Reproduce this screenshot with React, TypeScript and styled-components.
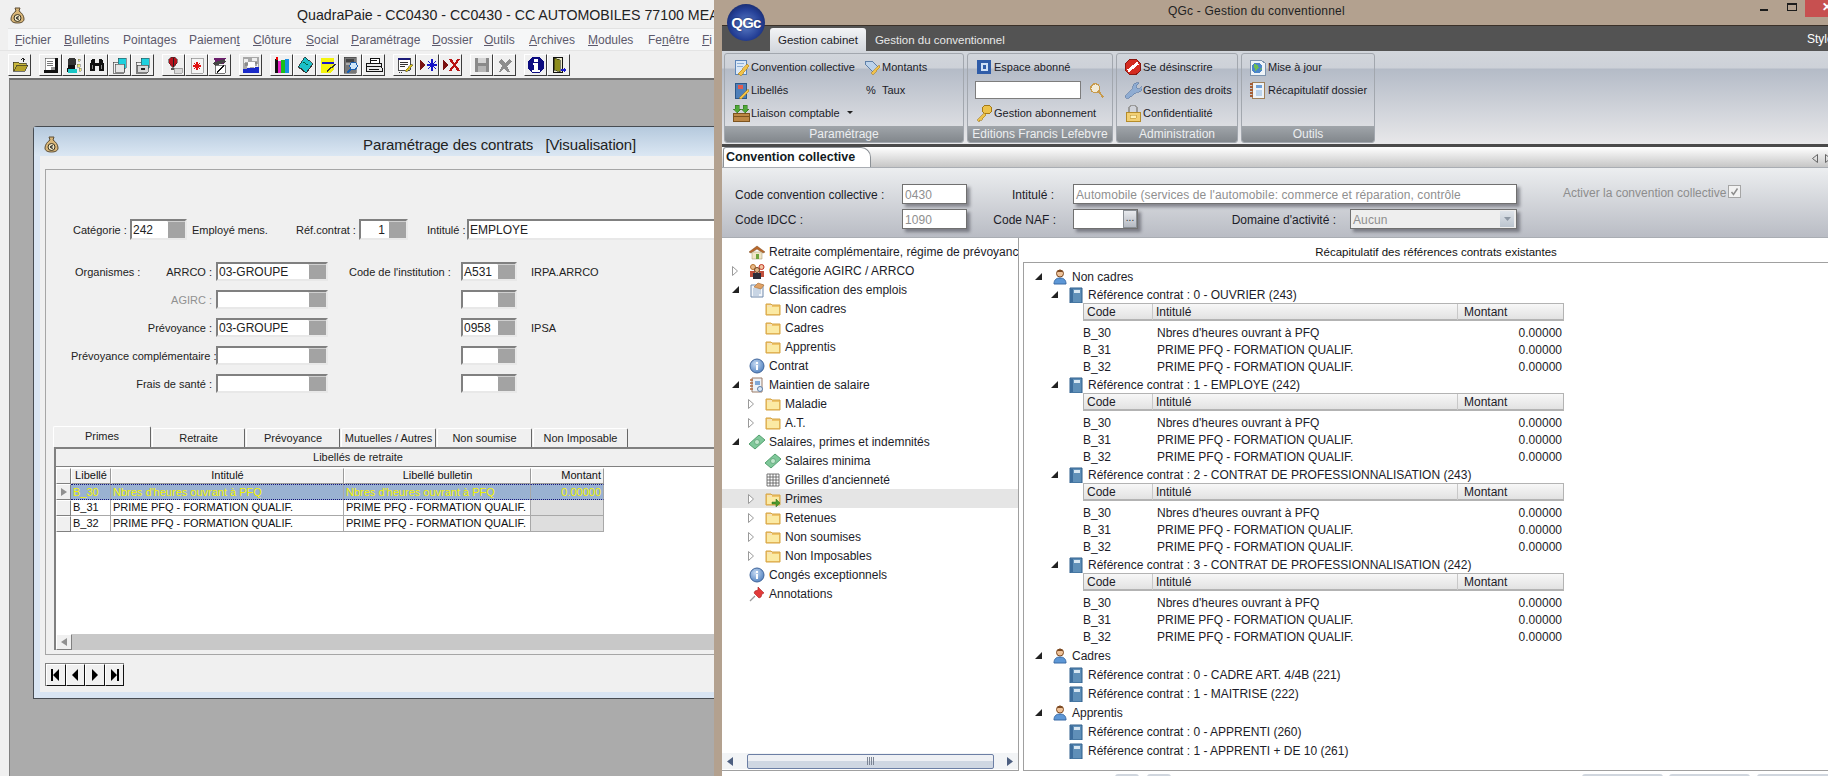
import React from "react";
import styled, { createGlobalStyle } from "styled-components";

const Global = createGlobalStyle`
  html, body { margin: 0; padding: 0; width: 1828px; height: 776px; overflow: hidden; background: #fff; }
  * { box-sizing: border-box; }
  body { font-family: "Liberation Sans", Arial, sans-serif; }
`;

const Page = styled.div`
  display: flex;
  width: 1828px;
  height: 776px;
  overflow: hidden;
`;

/* ---------- left application (QuadraPaie) ---------- */
const PaieWindow = styled.div`
  width: 714px;
  height: 776px;
  flex: none;
  display: flex;
  flex-direction: column;
  overflow: hidden;
  background: #f0f0f0;
`;
const PaieTitle = styled.div`
  height: 28px;
  flex: none;
  display: flex;
  align-items: center;
  padding: 2px 0 0 10px;
  color: #222;
  font-size: 14.200px;
  white-space: nowrap;
`;
const PaieTitleText = styled.span`
  margin-left: 272px;
`;
const MenuBar = styled.div`
  height: 22px;
  flex: none;
  margin-left: 8px;
  padding-left: 7px;
  display: flex;
  align-items: center;
  background: #f6f7f8;
  border-top: 1px solid #e2e2e2;
  white-space: nowrap;
`;
const MenuItem = styled.span<{ $w: number }>`
  width: ${(p) => p.$w}px;
  flex: none;
  font-size: 12px;
  color: #5c596b;
  u { text-underline-offset: 1px; }
`;
const ToolBar = styled.div`
  height: 28px;
  flex: none;
  display: flex;
  align-items: flex-start;
  padding: 3px 0 0 8px;
  border-top: 1px solid #e4e4e4;
`;
const ToolBtn = styled.div<{ $gap: number }>`
  width: 23px;
  height: 22px;
  flex: none;
  margin-left: ${(p) => p.$gap}px;
  display: flex;
  align-items: center;
  justify-content: center;
  background: #f0f0f0;
  border: 1px solid;
  border-color: #fff #3c3c3c #3c3c3c #fff;
`;
const MdiArea = styled.div`
  flex: 1;
  margin-left: 9px;
  background: #ababab;
  border-top: 2px solid #6e6e6e;
  border-left: 1px solid #808080;
  padding: 46px 0 0 23px;
  overflow: hidden;
`;
const ChildWindow = styled.div`
  width: 800px;
  height: 573px;
  display: flex;
  flex-direction: column;
  background: #d9e5f3;
  border: 1px solid #474c52;
  border-right: none;
  border-radius: 4px 0 0 0;
  padding: 0 0 6px 6px;
`;
const ChildTitle = styled.div`
  height: 29px;
  flex: none;
  margin-left: -6px;
  padding: 5px 0 0 10px;
  display: flex;
  align-items: center;
  background: linear-gradient(#b5c9dd, #dbe7f3);
  color: #222;
  font-size: 15px;
  white-space: nowrap;
`;
const ChildTitleText = styled.span`
  margin-left: 304px;
  white-space: pre;
  letter-spacing: -0.1px;
`;
const ChildBody = styled.div`
  flex: 1;
  display: flex;
  flex-direction: column;
  background: #f0f0f0;
  padding: 13px 0 0 5px;
`;
const Frame = styled.div`
  height: 486px;
  flex: none;
  border: 1px solid #a6a6a6;
  border-right: none;
  font-size: 11px;
  color: #222;
  white-space: nowrap;
`;
const TopRow = styled.div`
  margin-top: 49px;
  height: 21px;
  padding-left: 27px;
  display: flex;
  align-items: center;
`;
const FormLabel = styled.span<{ $w: number; $pad?: number }>`
  width: ${(p) => p.$w}px;
  padding-left: ${(p) => p.$pad ?? 0}px;
  flex: none;
`;
const OrgRows = styled.div`
  margin-top: 22px;
  display: flex;
  flex-direction: column;
  gap: 9px;
`;
const OrgRow = styled.div`
  height: 19px;
  padding-left: 25px;
  display: flex;
  align-items: center;
`;
const OrgCell = styled.span<{ $muted?: boolean }>`
  width: 141px;
  flex: none;
  display: flex;
  margin-right: 4px;
  color: ${(p) => (p.$muted ? "#909090" : "inherit")};
`;
const OrgCaption = styled.span`
  padding-left: 4px;
`;
const OrgName = styled.span`
  margin-left: auto;
`;
const InstLabel = styled.span`
  width: 133px;
  padding-left: 21px;
  flex: none;
`;
const InstNote = styled.span`
  margin-left: 14px;
`;
const SunkenField = styled.div<{ $w: number }>`
  width: ${(p) => p.$w}px;
  height: 100%;
  flex: none;
  display: flex;
  align-items: center;
  background: #fff;
  border: 2px solid;
  border-color: #808080 #e8e8e8 #e8e8e8 #808080;
  padding-left: 1px;
  font-size: 12px;
  overflow: hidden;
`;
const SunkenRight = styled.span`
  flex: 1;
  text-align: right;
  padding-right: 3px;
`;
const SpinBtn = styled.span`
  width: 18px;
  height: 100%;
  flex: none;
  margin-left: auto;
  background: #a3a3a3;
  border-left: 1px solid #fff;
  border-top: 1px solid #d0d0d0;
`;
const TabStrip = styled.div`
  margin: 33px 0 0 7px;
  height: 21px;
  display: flex;
  align-items: flex-end;
`;
const OldTab = styled.div<{ $active?: boolean; $w: number }>`
  width: ${(p) => p.$w}px;
  height: ${(p) => (p.$active ? 21 : 19)}px;
  flex: none;
  display: flex;
  align-items: center;
  justify-content: center;
  padding-bottom: ${(p) => (p.$active ? 3 : 0)}px;
  margin-right: 1px;
  border: 1px solid;
  border-bottom: none;
  border-color: #fff #666 #666 #fff;
  border-radius: 2px 2px 0 0;
`;
const TabPanel = styled.div`
  margin-left: 8px;
  height: 203px;
  display: flex;
  flex-direction: column;
  border-top: 2px solid #808080;
  border-left: 2px solid #808080;
`;
const TabPanelHead = styled.div`
  height: 17px;
  flex: none;
  width: 604px;
  text-align: center;
  line-height: 16px;
  background: #f0f0f0;
`;
const GridArea = styled.div`
  flex: 1;
  background: #fff;
  border-top: 1px solid #808080;
  padding-top: 1px;
`;
const GridRow = styled.div<{ $selected?: boolean }>`
  display: grid;
  grid-template-columns: 15px 40px 233px 187px 73px;
  width: 548px;
  height: 16px;
  align-items: stretch;
  color: ${(p) => (p.$selected ? "#f4f400" : "#111")};
`;
const GridHeadCell = styled.div<{ $right?: boolean }>`
  background: #f0f0f0;
  border: 1px solid;
  border-color: #fff #9a9a9a #9a9a9a #fff;
  text-align: ${(p) => (p.$right ? "right" : "center")};
  padding: 0 2px;
  line-height: 13px;
`;
const GridIndicator = styled.div`
  background: #f0f0f0;
  border: 1px solid;
  border-color: #fff #808080 #808080 #fff;
  display: flex;
  align-items: center;
  justify-content: center;
`;
const GridCell = styled.div<{ $selected?: boolean; $blank?: boolean; $right?: boolean }>`
  background: ${(p) => (p.$selected ? "#9ab2d2" : p.$blank ? "#dedede" : "#fff")};
  border-right: 1px solid #a8a8a8;
  border-bottom: ${(p) => (p.$selected ? "1px dotted #14147a" : "1px solid #a8a8a8")};
  border-top: ${(p) => (p.$selected ? "1px dotted #14147a" : "none")};
  padding: 0 2px;
  line-height: 14px;
  font-size: 11px;
  text-align: ${(p) => (p.$right ? "right" : "left")};
  overflow: hidden;
`;
const OldScroll = styled.div`
  height: 16px;
  flex: none;
  background: #c8c8c8;
  display: flex;
`;
const OldScrollBtn = styled.div`
  width: 16px;
  height: 16px;
  background: #f0f0f0;
  border: 1px solid;
  border-color: #fff #808080 #808080 #fff;
  display: flex;
  align-items: center;
  justify-content: center;
`;
const NavGroup = styled.div`
  margin-top: 8px;
  width: 79px;
  height: 23px;
  display: flex;
  border-top: 1px solid #808080;
  border-left: 1px solid #808080;
`;
const NavBtn = styled.div`
  flex: 1;
  display: flex;
  align-items: center;
  justify-content: center;
  background: #f0f0f0;
  border: 1px solid;
  border-color: #fff #111 #111 #fff;
`;

/* ---------- right application (QGc) ---------- */
const QgcWindow = styled.div`
  flex: 1;
  position: relative;
  height: 776px;
  display: flex;
  flex-direction: column;
  background: #fff;
  border-left: 8px solid #b3a18f;
  overflow: hidden;
  color: #1c1c28;
`;
const QgcTitle = styled.div`
  height: 26px;
  flex: none;
  margin-left: -8px;
  background: #b3a18f;
  border-bottom: 1px solid #3a3028;
  display: flex;
  align-items: flex-start;
  font-size: 12px;
  color: #222;
`;
const QgcTitleText = styled.span`
  margin: 4px 0 0 454px;
  letter-spacing: 0.2px;
`;
const WinControls = styled.div`
  margin-left: auto;
  display: flex;
  align-items: flex-start;
`;
const MinGlyph = styled.span`
  width: 8px;
  height: 2px;
  margin: 9px 19px 0 0;
  background: #1c1c1c;
`;
const MaxGlyph = styled.span`
  width: 10px;
  height: 8px;
  margin: 3px 8px 0 0;
  border: 1px solid #1c1c1c;
  border-top-width: 2px;
`;
const CloseBtn = styled.span`
  width: 23px;
  height: 17px;
  padding-left: 17px;
  overflow: hidden;
  background: #c75050;
  color: #fff;
  font-size: 12px;
  font-weight: bold;
  line-height: 15px;
`;
const Logo = styled.div`
  position: absolute;
  left: 5px;
  top: 4px;
  width: 38px;
  height: 37px;
  border-radius: 50%;
  display: flex;
  align-items: center;
  justify-content: center;
  background: radial-gradient(circle at 50% 55%, #5d7fc8 0%, #243f96 55%, #1a2d70 75%, #d9dde6 88%, #f1f2f4 100%);
  color: #fff;
  font-size: 15px;
  font-weight: bold;
  letter-spacing: -0.8px;
  text-shadow: 0 0 2px #10204f;
`;
const DarkBand = styled.div`
  height: 25px;
  flex: none;
  background: #535353;
  display: flex;
  align-items: flex-end;
  padding-left: 48px;
  font-size: 11.500px;
  white-space: nowrap;
  color: #e8e8e8;
`;
const RibbonTab = styled.div<{ $active?: boolean }>`
  height: 23px;
  display: flex;
  align-items: center;
  padding: 0 8px;
  margin-right: 1px;
  border-radius: 3px 3px 0 0;
  background: ${(p) => (p.$active ? "linear-gradient(#f3f4f6, #d3d7dd)" : "transparent")};
  color: ${(p) => (p.$active ? "#1c1c28" : "#e8e8e8")};
`;
const StyleLabel = styled.span`
  margin: 0 -8px 5px auto;
  width: 29px;
  overflow: hidden;
  color: #fff;
  font-size: 12px;
`;
const Ribbon = styled.div`
  height: 93px;
  flex: none;
  display: flex;
  gap: 3px;
  padding: 2px 0 0 2px;
  background: linear-gradient(#d2d6dc 0, #cdd1d8 17px, #b4bbc7 18px, #e8e8ea 93px);
  font-size: 11px;
  white-space: nowrap;
`;
const RibbonGroup = styled.div<{ $w: number }>`
  width: ${(p) => p.$w}px;
  height: 90px;
  flex: none;
  display: flex;
  flex-direction: column;
  border: 1px solid #a2a7ae;
  border-radius: 3px;
  overflow: hidden;
`;
const GroupBody = styled.div`
  flex: 1;
  display: flex;
  padding: 1px 0 0 7px;
`;
const GroupCol = styled.div<{ $w?: number }>`
  width: ${(p) => (p.$w ? `${p.$w}px` : "auto")};
  flex: none;
  display: flex;
  flex-direction: column;
`;
const RibbonItem = styled.div`
  height: 23px;
  display: flex;
  align-items: center;
  gap: 1px;
`;
const RibbonSearch = styled.div`
  height: 23px;
  display: flex;
  align-items: center;
  gap: 8px;
`;
const SearchBox = styled.span`
  width: 106px;
  height: 18px;
  background: #fff;
  border: 1px solid #7d7d7d;
`;
const PercentGlyph = styled.span`
  width: 18px;
  flex: none;
  padding-left: 3px;
`;
const DropCaret = styled.span`
  width: 0;
  height: 0;
  margin-left: 6px;
  border-left: 3px solid transparent;
  border-right: 3px solid transparent;
  border-top: 3px solid #222;
`;
const GroupCaption = styled.div`
  height: 16px;
  flex: none;
  text-align: center;
  line-height: 16px;
  font-size: 12px;
  color: #eceef0;
  background: linear-gradient(#a0a5aa, #82878c);
`;
const RibbonEdge = styled.div`
  height: 3px;
  flex: none;
  background: #4a4a4a;
`;
const DocTabStrip = styled.div`
  height: 21px;
  flex: none;
  display: flex;
  align-items: flex-end;
  background: linear-gradient(#ffffff, #c6c6c6);
  border-bottom: 1px solid #a9adb3;
`;
const DocTab = styled.div`
  width: 148px;
  height: 20px;
  margin-left: 1px;
  padding-left: 2px;
  font-size: 12.500px;
  font-weight: bold;
  line-height: 18px;
  color: #111a22;
  background: #fff;
  border: 1px solid #8c9196;
  border-bottom: none;
  border-radius: 3px 10px 0 0;
`;
const DocArrows = styled.div`
  margin: 0 -3px 4px auto;
  display: flex;
  gap: 7px;
`;
const FormPanel = styled.div`
  height: 70px;
  flex: none;
  padding: 16px 0 0 13px;
  display: flex;
  flex-direction: column;
  gap: 5px;
  background: linear-gradient(#eceef0, #b9bcc4);
  border-bottom: 1px solid #a9adb3;
  font-size: 12px;
  white-space: nowrap;
`;
const FormRow = styled.div`
  height: 20px;
  display: flex;
  align-items: center;
`;
const QLabel = styled.span<{ $w: number; $endPad?: number }>`
  width: ${(p) => p.$w}px;
  flex: none;
  padding-top: 2px;
  text-align: ${(p) => (p.$endPad ? "right" : "left")};
  padding-right: ${(p) => p.$endPad ?? 0}px;
`;
const QField = styled.div<{ $w: number; $plain?: boolean }>`
  width: ${(p) => p.$w}px;
  height: 20px;
  flex: none;
  display: flex;
  align-items: center;
  padding: 2px 0 0 2px;
  background: ${(p) => (p.$plain ? "#eeeeee" : "#fff")};
  border: 1px solid #707070;
  box-shadow: 3px 3px 3px rgba(40, 40, 50, 0.45);
  color: #8f8f8f;
  font-size: 12px;
  letter-spacing: 0.1px;
  overflow: hidden;
`;
const EllipsisBtn = styled.span`
  width: 14px;
  height: 18px;
  margin: -2px 0 0 auto;
  background: linear-gradient(#e8eaee, #b5bac2);
  border: 1px solid #8a8f95;
  color: #333;
  font-size: 10px;
  line-height: 14px;
  text-align: center;
`;
const SelectArrow = styled.span`
  width: 14px;
  height: 16px;
  margin: -2px 2px 0 auto;
  display: flex;
  align-items: center;
  justify-content: center;
  background: linear-gradient(#dfe4ea, #bcc5cf);
`;
const ActivateLabel = styled.span`
  margin: 0 0 3px 46px;
  color: #8d8d8d;
`;
const CheckBox = styled.span`
  width: 13px;
  height: 13px;
  margin: 0 0 5px 2px;
  background: #f2f2f2;
  border: 1px solid #a5a5a5;
  display: flex;
  align-items: center;
  justify-content: center;
`;
const Split = styled.div`
  flex: 1;
  min-height: 0;
  display: flex;
  font-size: 12px;
  white-space: nowrap;
`;
const NavPane = styled.div`
  width: 297px;
  flex: none;
  display: flex;
  flex-direction: column;
  border-right: 1px solid #a0a0a0;
  border-bottom: 1px solid #a0a0a0;
`;
const NavRows = styled.div`
  flex: 1;
  padding-top: 4px;
  overflow: hidden;
`;
const TreeRow = styled.div<{ $level: number; $h: number; $selected?: boolean; $base: number }>`
  height: ${(p) => p.$h}px;
  display: flex;
  align-items: center;
  padding-left: ${(p) => p.$base + p.$level * 16}px;
  background: ${(p) => (p.$selected ? "#e5e5e5" : "transparent")};
`;
const ArrowSlot = styled.span`
  width: 22px;
  flex: none;
  padding-left: 5px;
  display: flex;
  align-items: center;
`;
const TreeIcon = styled.span`
  width: 16px;
  height: 16px;
  flex: none;
  margin-right: 4px;
  display: flex;
`;
const HScroll = styled.div`
  height: 16px;
  flex: none;
  margin-bottom: 1px;
  display: flex;
  align-items: center;
  padding: 0 5px;
  background: #f2f4f6;
`;
const HThumb = styled.div`
  width: 247px;
  height: 15px;
  margin: 0 auto;
  display: flex;
  align-items: center;
  justify-content: center;
  gap: 1px;
  border: 1px solid #6c7fa5;
  border-radius: 2px;
  background: linear-gradient(#eef0f4 50%, #cfd7e2 50%);
`;
const GripLine = styled.i`
  width: 1px;
  height: 8px;
  background: #7c8594;
`;
const RecapPane = styled.div`
  width: 826px;
  flex: none;
  margin-left: 4px;
  display: flex;
  flex-direction: column;
`;
const RecapHead = styled.div`
  height: 24px;
  flex: none;
  text-align: center;
  line-height: 28px;
  color: #111;
  font-size: 11.500px;
`;
const RecapBox = styled.div`
  flex: 1;
  padding-top: 4px;
  border: 1px solid #a0a0a0;
  overflow: hidden;
`;
const RecapTable = styled.div`
  margin-left: 59px;
  width: 481px;
`;
const RecapHeader = styled.div`
  height: 18px;
  display: grid;
  grid-template-columns: 69px 305px 107px;
  background: linear-gradient(#f7f7f7, #e2e2e2);
  border: 1px solid #b3b3b3;
  border-bottom-width: 2px;
  margin-bottom: 4px;
`;
const RecapHeadCell = styled.span<{ $last?: boolean }>`
  padding-left: ${(p) => (p.$last ? 6 : 3)}px;
  line-height: 16px;
  border-right: ${(p) => (p.$last ? "none" : "1px solid #c8c8c8")};
`;
const RecapLine = styled.div`
  height: 17px;
  display: grid;
  grid-template-columns: 74px 300px 107px;
  line-height: 17px;
`;
const RecapAmount = styled.span`
  text-align: right;
  padding-right: 2px;
`;
const FootBar = styled.div`
  height: 5px;
  flex: none;
  padding: 3px 0 0 393px;
  display: flex;
  overflow: hidden;
`;
const FootBtn = styled.span<{ $w: number; $gap: number }>`
  width: ${(p) => p.$w}px;
  height: 10px;
  flex: none;
  margin-right: ${(p) => p.$gap}px;
  border-radius: 3px;
  background: #d0d6de;
`;
const BagSvg = styled.svg`
  flex: none;
`;

/* ---------- icons ---------- */
const S = (props: React.SVGProps<SVGSVGElement>) => (
  <svg width="18" height="18" viewBox="0 0 18 18" shapeRendering="crispEdges" {...props} />
);
const Sm = (props: React.SVGProps<SVGSVGElement>) => <svg width="16" height="16" viewBox="0 0 16 16" {...props} />;

const toolIcons: React.ReactNode[] = [
  <S key="a"><path d="M2 6h5l1 1h7v2H7l-4 6H2z" fill="#c9b83c" stroke="#222" strokeWidth=".6" /><path d="M3 15l3-6h11l-3 6z" fill="#b5a22a" stroke="#222" strokeWidth=".6" /><path d="M10 4l2-2 2 2m-2-2v4" stroke="#222" fill="none" /></S>,
  <S key="b"><path d="M3 2h10v12H3z" fill="#fff" stroke="#333" strokeWidth=".5" /><path d="M5 5h6M5 7h6M5 9h6" stroke="#777" /><path d="M13 2h3v15H2v-3h11z" fill="#111" /><path d="M9 11h4v3H9z" fill="#999" /></S>,
  <S key="c"><circle cx="7" cy="6" r="4.500" fill="#333" /><path d="M3 9h7l1 7H2z" fill="#111" /><path d="M3 13h9v4H3z" fill="#18c6c6" /><path d="M13 3h2v2h-2zM12 8h3v3h-3zM14 12h2v3h-2z" fill="#efe97a" stroke="#555" strokeWidth=".4" /></S>,
  <S key="d"><path d="M2 8l2-5h3v4h4V3h3l2 5v7h-5v-5H7v5H2z" fill="#111" /><path d="M4 9h1v4H4zM13 9h1v4h-1z" fill="#888" /></S>,
  <S key="e"><path d="M2 6h11v11H2z" fill="#f1f1f1" stroke="#333" strokeWidth=".6" /><path d="M7 2h8v10H7z" fill="#1fd0de" stroke="#333" strokeWidth=".5" /><path d="M4 8h9v8H4z" fill="#e6e6e6" stroke="#444" strokeWidth=".6" /></S>,
  <S key="f"><path d="M2 6h11v11H2z" fill="#f1f1f1" stroke="#333" strokeWidth=".6" /><path d="M7 2h8v10H7z" fill="#1fd0de" stroke="#333" strokeWidth=".5" /><path d="M3 9h11v7H3z" fill="#d8d8d8" stroke="#333" strokeWidth=".6" /><path d="M7 12h4v2H7z" fill="#222" /></S>,
  <S key="g"><path d="M8 1c4 0 5 3 4 6l-3 4H7L4 7C3 4 4 1 8 1z" fill="#b4141e" stroke="#222" strokeWidth=".5" /><path d="M8 2v9" stroke="#222" /><path d="M6 12h3v2H6z" fill="#555" /><path d="M9 12h8v5H9z" fill="#d9d9d9" stroke="#666" strokeWidth=".5" /></S>,
  <S key="h"><path d="M3 2h12v15H3z" fill="#f5f5f5" stroke="#777" strokeWidth=".6" /><path d="M9 6v8M5 10h8M6 7l6 6M12 7l-6 6" stroke="#e01010" strokeWidth="1.200" /></S>,
  <S key="i"><path d="M3 2h12l-2 6H5z" fill="#6b1e6b" /><path d="M2 7l11-4 2 3-11 4z" fill="#444" /><path d="M4 9h10v8H4z" fill="#fff" stroke="#222" strokeWidth=".6" /><path d="M6 16l7-6" stroke="#111" strokeWidth="1.500" /></S>,
  <S key="j"><path d="M1 1h16v16H1z" fill="#a8a8a8" /><path d="M2 3h4v4H2zM10 2h5v3h-5zM5 9h3v3H5zM12 8h4v4h-4z" fill="#eee" /><path d="M3 6h12v4H3z" fill="#777" opacity=".6" /><path d="M6 6h7v5H6z" fill="#fff" /><path d="M1 13l16-2v6H1z" fill="#1a2ac8" /></S>,
  <S key="k"><path d="M2 3h3v14H2z" fill="#111" /><path d="M3 1h2v3H3z" fill="#e00" /><path d="M5 5h3v12H5z" fill="#e81fc8" /><path d="M8 4h4v13H8z" fill="#18c01a" /><path d="M12 3h4v14h-4z" fill="#1a8fe0" /></S>,
  <S key="l"><path d="M9 1l8 7-7 9-8-6z" fill="#1cc0c8" stroke="#111" strokeWidth=".7" /><path d="M3 11l7 6 7-9" stroke="#333" fill="none" /><path d="M7 6l5 3" stroke="#064" /></S>,
  <S key="m"><path d="M2 2h13v11l-4 4H2z" fill="#f4f40c" /><path d="M3 7h12" stroke="#1a1acc" strokeWidth="1.400" /><path d="M8 16l9-7-1-1-9 7z" fill="#333" /></S>,
  <S key="n"><path d="M2 1h12v16H2z" fill="#777" stroke="#333" strokeWidth=".5" /><path d="M4 3h8v3H4z" fill="#444" /><path d="M4 7h6v2H4z" fill="#aaa" /><circle cx="11.500" cy="10" r="3.600" fill="#cfe6f8" stroke="#1a5fb0" /><path d="M9 13l-4 4" stroke="#1a5fb0" strokeWidth="1.600" /></S>,
  <S key="o"><path d="M5 2h9v5H5z" fill="#fff" stroke="#111" /><path d="M2 7h14l1 5v3H1v-3z" fill="#e8e8e8" stroke="#111" /><path d="M2 10h14M4 13h10" stroke="#111" /><path d="M6 4h6" stroke="#111" /></S>,
  <S key="p"><path d="M2 2h12v12H2z" fill="#fff" stroke="#222" strokeWidth=".8" /><path d="M2 2h12v2H2z" fill="#1a1a78" /><path d="M4 6h8M4 8h8M4 10h5" stroke="#333" /><path d="M9 15l6-7 2 1-6 7z" fill="#d9c21e" stroke="#333" strokeWidth=".4" /><path d="M3 16h4" stroke="#333" strokeDasharray="1 1" /></S>,
  <S key="q"><path d="M1 4l6 5-6 5z" fill="#7a1212" /><path d="M13 3v12M8 9h10M9 5l8 8M17 5l-8 8" stroke="#1515c8" strokeWidth="1.200" /></S>,
  <S key="r"><path d="M1 4l6 5-6 5z" fill="#7a1212" /><path d="M8 3l9 12M17 3l-9 12" stroke="#b81414" strokeWidth="2.200" /></S>,
  <S key="s"><path d="M2 2h14v14H2z" fill="#8a8a8a" /><path d="M5 2h8v5H5z" fill="#d5d5d5" /><path d="M5 10h8v6H5z" fill="#b5b5b5" /></S>,
  <S key="t"><path d="M5 3l4 4 4-4 3 2-5 5 3 6h-3l-3-4-3 4H3l3-6-3-4z" fill="#8d8d8d" /></S>,
  <S key="u"><circle cx="9" cy="9" r="8.500" fill="#0c0c80" /><path d="M7 3h4v3H7zM6 7h5v7h2v2H5v-2h2V9H6z" fill="#fff" /></S>,
  <S key="v"><path d="M3 1h9v15H3z" fill="#e8e8c8" stroke="#111" /><path d="M4 2l6 2v12l-6-2z" fill="#8c8c1c" stroke="#111" strokeWidth=".5" /><path d="M11 14h5m0 0l-2-2m2 2l-2 2" stroke="#1a1acc" strokeWidth="1.400" /></S>,
];
const toolGaps = [0, 8, 0, 0, 0, 0, 8, 0, 0, 8, 8, 0, 0, 0, 0, 8, 0, 0, 8, 0, 8, 0];

const MoneyBag = () => (
  <BagSvg width="15" height="17" viewBox="0 0 15 17">
    <path d="M5 1h5l-1 3c3 2 5 5 5 8 0 3-3 4-6.500 4S1 15 1 12c0-3 2-6 5-8z" fill="#d9b678" stroke="#5c4d34" />
    <circle cx="7.500" cy="11" r="3.500" fill="#f0e6c4" stroke="#3a3320" />
    <path d="M9 9.500H7.500c-1 0-1 3 0 3H9M6 10.500h2.500M6 11.500h2.500" stroke="#222" fill="none" strokeWidth=".7" />
  </BagSvg>
);
const FolderIcon = ({ arrow }: { arrow?: boolean }) => (
  <Sm>
    <path d="M1 3h5l1 1h8v10H1z" fill="#efc56a" stroke="#d5a342" />
    <path d="M2 6h12v7H2z" fill="#fbeaa4" />
    <path d="M2 5h5" stroke="#fff" />
    {arrow && <path d="M7 11h4V8l4 4-4 4v-3H7z" fill="#4c9a2e" stroke="#2c6e18" strokeWidth=".5" />}
  </Sm>
);
const InfoIcon = () => (
  <Sm>
    <defs>
      <radialGradient id="ig" cx=".4" cy=".35" r=".8">
        <stop offset="0" stopColor="#c6daf2" />
        <stop offset="1" stopColor="#3f74b8" />
      </radialGradient>
    </defs>
    <circle cx="8" cy="8" r="7" fill="url(#ig)" stroke="#41669b" />
    <path d="M7 4h2v2H7zM7 7h2v5H7z" fill="#fff" />
  </Sm>
);
const HomeIcon = () => (
  <Sm>
    <path d="M0 8l8-6 8 6-2 1-6-4-6 4z" fill="#b9672a" stroke="#7c4a1e" strokeWidth=".5" />
    <path d="M3 8h10v7H3z" fill="#f2e6c8" stroke="#9e9069" strokeWidth=".5" />
    <path d="M7 10h3v5H7z" fill="#6fa43d" />
  </Sm>
);
const PeopleIcon = () => (
  <Sm>
    <circle cx="4" cy="4" r="2.500" fill="#e6b98a" stroke="#b5702a" />
    <circle cx="12.500" cy="4" r="2.500" fill="#f0c4a0" stroke="#c03020" />
    <path d="M1 14V8h5v6zM10 14V8h5v6z" fill="#c0503c" />
    <circle cx="8" cy="7" r="2.500" fill="#e6b98a" stroke="#6b4020" />
    <path d="M4 16v-6h8v6z" fill="#2e2e3a" />
  </Sm>
);
const NotesIcon = () => (
  <Sm>
    <path d="M2 3h12v12H2z" fill="#f3f6fa" stroke="#6f89ab" />
    <path d="M4 7h8M4 9h8M4 11h8M4 13h6" stroke="#9db4cf" />
    <path d="M5 5l4-4 6 2-3 4z" fill="#e1a265" stroke="#a56b33" strokeWidth=".6" />
  </Sm>
);
const LedgerIcon = () => (
  <Sm>
    <path d="M3 1h10v14H3z" fill="#eef3f8" stroke="#9c7c68" />
    <path d="M1 3h3M1 6h3M1 9h3M1 12h3" stroke="#b06a3f" strokeWidth="1.400" />
    <path d="M6 4h5v4H6z" fill="#7fa8d8" />
    <circle cx="11" cy="12" r="2.500" fill="#dbe8f6" stroke="#5e7fa8" />
  </Sm>
);
const MoneyIcon = () => (
  <Sm>
    <path d="M0 10L10 1l6 5-10 9z" fill="#7fc89a" stroke="#55a070" />
    <circle cx="8" cy="8" r="2.500" fill="#bfe6cb" stroke="#4f9468" strokeWidth=".6" />
  </Sm>
);
const GridIcon = () => (
  <Sm>
    <path d="M2 2h12v12H2zM2 5h12M2 8h12M2 11h12M5 2v12M8 2v12M11 2v12" fill="#fff" stroke="#555" strokeWidth=".8" />
  </Sm>
);
const PinIcon = () => (
  <Sm>
    <path d="M9 1l6 6-2 1-1 3-2 1-5-5 1-2 3-1z" fill="#e23a3a" stroke="#a81e1e" strokeWidth=".6" />
    <path d="M6 10l-5 5" stroke="#9a9a9a" strokeWidth="1.200" />
  </Sm>
);
const PersonIcon = () => (
  <Sm>
    <circle cx="8" cy="4.500" r="3.500" fill="#efc39a" stroke="#7d4a22" />
    <path d="M5 3c1-3 5-3 6 0z" fill="#7d4a22" />
    <path d="M2 15c0-4 2-6 6-6s6 2 6 6z" fill="#5d97d6" stroke="#3a6aa5" />
  </Sm>
);
const BookIcon = () => (
  <Sm>
    <path d="M2 1h12v15H2z" fill="#5f8fb8" stroke="#2f5f8c" />
    <path d="M2 2h3v13H2z" fill="#3d6d9c" />
    <path d="M6 3h6v3H6z" fill="#d7e6f2" />
  </Sm>
);

const PencilDoc = () => (
  <S><path d="M3 2h11v14H3z" fill="#dbe8f6" stroke="#5c85b8" /><path d="M5 5h7M5 8h6" stroke="#8eb0d6" /><path d="M6 16l9-10 2 2-8 10z" fill="#f1c24a" stroke="#b0801c" strokeWidth=".6" /></S>
);
const PencilTag = () => (
  <S><path d="M2 3l7 0 6 6-5 5-8-8z" fill="#bcd2ea" stroke="#5f80a8" /><path d="M8 15l8-8 1 2-7 8z" fill="#f1c24a" stroke="#b0801c" strokeWidth=".6" /></S>
);
const PencilBook = () => (
  <S><path d="M3 2h11v15H3z" fill="#4e7fb9" stroke="#2d5788" /><path d="M6 4h5v4H6z" fill="#e25b4e" /><path d="M7 17l9-9 1 2-8 8z" fill="#f1c24a" stroke="#b0801c" strokeWidth=".6" /></S>
);
const CrateIcon = () => (
  <S><path d="M1 9h16v8H1z" fill="#bd8846" stroke="#7d5420" /><path d="M1 12h16" stroke="#7d5420" /><path d="M3 1h4v4h2L5 9 1 5h2zM11 1h4v4h2l-4 4-4-4h2z" fill="#4fa838" stroke="#2c6e18" strokeWidth=".5" /></S>
);
const SquareLogo = () => (
  <S><path d="M2 2h14v14H2z" fill="#2f5ca8" /><path d="M6 5h7v8H6zM8 7v4h3V7z" fill="#cfe0f6" fillRule="evenodd" /></S>
);
const Lens = () => (
  <S width="16" height="18"><circle cx="7" cy="7" r="5" fill="#f2ead6" stroke="#c79a4c" strokeWidth="1.400" /><path d="M11 11l5 6" stroke="#c79a4c" strokeWidth="2.200" /></S>
);
const KeyIcon = () => (
  <S><circle cx="12" cy="5.500" r="4.500" fill="#ecc24a" stroke="#a57a18" /><path d="M9 9l-7 7 2 2 1-2 2 0 1-2 3-3z" fill="#ecc24a" stroke="#a57a18" strokeWidth=".6" /></S>
);
const BanIcon = () => (
  <S><circle cx="9" cy="9" r="8" fill="#d42b20" stroke="#8a1610" /><path d="M4 13L14 5" stroke="#fff" strokeWidth="3.200" /></S>
);
const WrenchIcon = () => (
  <S><path d="M2 17l-1-2 8-8c-1-3 2-6 6-5l-3 3 1 2 2 1 3-3c1 4-2 7-5 6l-8 6z" fill="#8facd2" stroke="#5675a0" strokeWidth=".6" /></S>
);
const LockIcon = () => (
  <S><path d="M5 8V5c0-5 8-5 8 0v3" fill="none" stroke="#9a9a9a" strokeWidth="1.600" /><path d="M2 8h14v9H2z" fill="#f2cf72" stroke="#b58c2a" /><path d="M6 11h6v3H6z" fill="#fff2b8" stroke="#b58c2a" strokeWidth=".5" /></S>
);
const GlobeIcon = () => (
  <S><path d="M1 2h11l4 3v12H1z" fill="#eef3f8" stroke="#7c93ad" /><circle cx="8" cy="10" r="5.500" fill="#4b86c8" /><path d="M5 6l4 1 1 3-4 3zM10 11l3-1-1 3z" fill="#6fbf52" /></S>
);
const ReportIcon = () => (
  <S><path d="M3 1h12v16H3z" fill="#eef3f8" stroke="#a0805a" /><path d="M1 3h3M1 6h3M1 9h3M1 12h3M1 15h3" stroke="#a55c34" strokeWidth="1.300" /><path d="M7 4h6v3H7z" fill="#6f9fd8" /><path d="M7 9h6v6H7z" fill="#bcd3ec" /></S>
);

const TriSolid = () => (
  <svg width="7" height="7" viewBox="0 0 7 7">
    <path d="M7 0v7H0z" fill="#222" />
  </svg>
);
const TriHollow = () => (
  <svg width="6" height="10" viewBox="0 0 6 10">
    <path d="M.5.500l5 4.500-5 4.500z" fill="#fff" stroke="#9a9a9a" />
  </svg>
);

/* ---------- data ---------- */
const menus: [string, string, string, number][] = [
  ["", "F", "ichier", 49],
  ["", "B", "ulletins", 59],
  ["Pointa", "g", "es", 66],
  ["Paiemen", "t", "", 64],
  ["", "C", "lôture", 53],
  ["", "S", "ocial", 45],
  ["", "P", "aramétrage", 81],
  ["", "D", "ossier", 52],
  ["", "O", "utils", 45],
  ["", "A", "rchives", 59],
  ["", "M", "odules", 60],
  ["Fe", "n", "être", 54],
  ["", "F", "i", 12],
];

type Tree = { label: string; level: number; icon: React.ReactNode; arrow?: "open" | "closed"; selected?: boolean };
const navTree: Tree[] = [
  { label: "Retraite complémentaire, régime de prévoyanc", level: 0, icon: <HomeIcon /> },
  { label: "Catégorie AGIRC / ARRCO", level: 0, icon: <PeopleIcon />, arrow: "closed" },
  { label: "Classification des emplois", level: 0, icon: <NotesIcon />, arrow: "open" },
  { label: "Non cadres", level: 1, icon: <FolderIcon /> },
  { label: "Cadres", level: 1, icon: <FolderIcon /> },
  { label: "Apprentis", level: 1, icon: <FolderIcon /> },
  { label: "Contrat", level: 0, icon: <InfoIcon /> },
  { label: "Maintien de salaire", level: 0, icon: <LedgerIcon />, arrow: "open" },
  { label: "Maladie", level: 1, icon: <FolderIcon />, arrow: "closed" },
  { label: "A.T.", level: 1, icon: <FolderIcon />, arrow: "closed" },
  { label: "Salaires, primes et indemnités", level: 0, icon: <MoneyIcon />, arrow: "open" },
  { label: "Salaires minima", level: 1, icon: <MoneyIcon /> },
  { label: "Grilles d'ancienneté", level: 1, icon: <GridIcon /> },
  { label: "Primes", level: 1, icon: <FolderIcon arrow />, arrow: "closed", selected: true },
  { label: "Retenues", level: 1, icon: <FolderIcon />, arrow: "closed" },
  { label: "Non soumises", level: 1, icon: <FolderIcon />, arrow: "closed" },
  { label: "Non Imposables", level: 1, icon: <FolderIcon />, arrow: "closed" },
  { label: "Congés exceptionnels", level: 0, icon: <InfoIcon /> },
  { label: "Annotations", level: 0, icon: <PinIcon /> },
];

const primes: [string, string, string][] = [
  ["B_30", "Nbres d'heures ouvrant à PFQ", "0.00000"],
  ["B_31", "PRIME PFQ - FORMATION QUALIF.", "0.00000"],
  ["B_32", "PRIME PFQ - FORMATION QUALIF.", "0.00000"],
];
const contracts = [
  "Référence contrat : 0 - OUVRIER (243)",
  "Référence contrat : 1 - EMPLOYE (242)",
  "Référence contrat : 2 - CONTRAT DE PROFESSIONNALISATION (243)",
  "Référence contrat : 3 - CONTRAT DE PROFESSIONNALISATION (242)",
];
const groupsRest: [string, string[]][] = [
  ["Cadres", ["Référence contrat : 0 - CADRE ART. 4/4B (221)", "Référence contrat : 1 - MAITRISE (222)"]],
  ["Apprentis", ["Référence contrat : 0 - APPRENTI (260)", "Référence contrat : 1 - APPRENTI + DE 10  (261)"]],
];
const oldTabs: [string, number][] = [
  ["Primes", 98],
  ["Retraite", 93],
  ["Prévoyance", 94],
  ["Mutuelles / Autres", 95],
  ["Non soumise", 95],
  ["Non Imposable", 95],
];

const orgRows: [string, boolean, string, string, string][] = [
  ["ARRCO :", false, "03-GROUPE", "A531", "IRPA.ARRCO"],
  ["AGIRC :", true, "", "", ""],
  ["Prévoyance :", false, "03-GROUPE", "0958", "IPSA"],
  ["Prévoyance complémentaire :", false, "", "", ""],
  ["Frais de santé :", false, "", "", ""],
];

const Arrow = ({ kind }: { kind?: "open" | "closed" }) => (
  <ArrowSlot>{kind === "open" ? <TriSolid /> : kind === "closed" ? <TriHollow /> : null}</ArrowSlot>
);

export default function App() {
  return (
    <Page>
      <Global />
      <PaieWindow>
        <PaieTitle>
          <MoneyBag />
          <PaieTitleText>QuadraPaie - CC0430 - CC0430 - CC AUTOMOBILES 77100 MEA</PaieTitleText>
        </PaieTitle>
        <MenuBar>
          {menus.map(([a, u, b, w], i) => (
            <MenuItem key={i} $w={w}>
              {a}
              <u>{u}</u>
              {b}
            </MenuItem>
          ))}
        </MenuBar>
        <ToolBar>
          {toolIcons.map((icon, i) => (
            <ToolBtn key={i} $gap={toolGaps[i]}>
              {icon}
            </ToolBtn>
          ))}
        </ToolBar>
        <MdiArea>
          <ChildWindow>
            <ChildTitle>
              <MoneyBag />
              <ChildTitleText>Paramétrage des contrats   [Visualisation]</ChildTitleText>
            </ChildTitle>
            <ChildBody>
              <Frame>
                <TopRow>
                  <FormLabel $w={57}>Catégorie :</FormLabel>
                  <SunkenField $w={57}>
                    242
                    <SpinBtn />
                  </SunkenField>
                  <FormLabel $w={109} $pad={5}>
                    Employé mens.
                  </FormLabel>
                  <FormLabel $w={63}>Réf.contrat :</FormLabel>
                  <SunkenField $w={49}>
                    <SunkenRight>1</SunkenRight>
                    <SpinBtn />
                  </SunkenField>
                  <FormLabel $w={59} $pad={19}>
                    Intitulé :
                  </FormLabel>
                  <SunkenField $w={400}>EMPLOYE</SunkenField>
                </TopRow>
                <OrgRows>
                  {orgRows.map(([label, muted, org, code, note], i) => (
                    <OrgRow key={i}>
                      <OrgCell $muted={muted}>
                        {i === 0 && <OrgCaption>Organismes :</OrgCaption>}
                        <OrgName>{label}</OrgName>
                      </OrgCell>
                      <SunkenField $w={112}>
                        {org}
                        <SpinBtn />
                      </SunkenField>
                      <InstLabel>{i === 0 ? "Code de l'institution :" : ""}</InstLabel>
                      <SunkenField $w={56}>
                        {code}
                        <SpinBtn />
                      </SunkenField>
                      <InstNote>{note}</InstNote>
                    </OrgRow>
                  ))}
                </OrgRows>
                <TabStrip>
                  {oldTabs.map(([t, w], i) => (
                    <OldTab key={t} $active={i === 0} $w={w}>
                      {t}
                    </OldTab>
                  ))}
                </TabStrip>
                <TabPanel>
                  <TabPanelHead>Libellés de retraite</TabPanelHead>
                  <GridArea>
                    <GridRow>
                      <GridIndicator />
                      <GridHeadCell>Libellé</GridHeadCell>
                      <GridHeadCell>Intitulé</GridHeadCell>
                      <GridHeadCell>Libellé bulletin</GridHeadCell>
                      <GridHeadCell $right>Montant</GridHeadCell>
                    </GridRow>
                    {primes.map(([c, t, m], i) => (
                      <GridRow key={c} $selected={i === 0}>
                        <GridIndicator>
                          {i === 0 && (
                            <svg width="6" height="8" viewBox="0 0 6 8">
                              <path d="M0 0l6 4-6 4z" fill="#909090" />
                            </svg>
                          )}
                        </GridIndicator>
                        <GridCell $selected={i === 0}>{c}</GridCell>
                        <GridCell $selected={i === 0}>{t}</GridCell>
                        <GridCell $selected={i === 0}>{t}</GridCell>
                        <GridCell $selected={i === 0} $blank={i !== 0} $right>
                          {i === 0 ? m : ""}
                        </GridCell>
                      </GridRow>
                    ))}
                  </GridArea>
                  <OldScroll>
                    <OldScrollBtn>
                      <svg width="6" height="8" viewBox="0 0 6 8">
                        <path d="M6 0L0 4l6 4z" fill="#909090" />
                      </svg>
                    </OldScrollBtn>
                  </OldScroll>
                </TabPanel>
              </Frame>
              <NavGroup>
                {["M2 1h2v12H2zM10 1v12L4 7z", "M9 1v12L3 7z", "M4 1v12l6-6z", "M3 1v12l6-6zM9 1h2v12H9z"].map((d, i) => (
                  <NavBtn key={i}>
                    <svg width="13" height="14" viewBox="0 0 13 14">
                      <path d={d} fill="#000" />
                    </svg>
                  </NavBtn>
                ))}
              </NavGroup>
            </ChildBody>
          </ChildWindow>
        </MdiArea>
      </PaieWindow>

      <QgcWindow>
        <QgcTitle>
          <QgcTitleText>QGc - Gestion du conventionnel</QgcTitleText>
          <WinControls>
            <MinGlyph />
            <MaxGlyph />
            <CloseBtn>✕</CloseBtn>
          </WinControls>
        </QgcTitle>
        <Logo>QGc</Logo>
        <DarkBand>
          <RibbonTab $active>Gestion cabinet</RibbonTab>
          <RibbonTab>Gestion du conventionnel</RibbonTab>
          <StyleLabel>Style</StyleLabel>
        </DarkBand>
        <Ribbon>
          <RibbonGroup $w={240}>
            <GroupBody>
              <GroupCol $w={131}>
                <RibbonItem><PencilDoc />Convention collective</RibbonItem>
                <RibbonItem><PencilBook />Libellés</RibbonItem>
                <RibbonItem><CrateIcon />Liaison comptable<DropCaret /></RibbonItem>
              </GroupCol>
              <GroupCol>
                <RibbonItem><PencilTag />Montants</RibbonItem>
                <RibbonItem><PercentGlyph>%</PercentGlyph>Taux</RibbonItem>
              </GroupCol>
            </GroupBody>
            <GroupCaption>Paramétrage</GroupCaption>
          </RibbonGroup>
          <RibbonGroup $w={146}>
            <GroupBody>
              <GroupCol>
                <RibbonItem><SquareLogo />Espace abonné</RibbonItem>
                <RibbonSearch><SearchBox /><Lens /></RibbonSearch>
                <RibbonItem><KeyIcon />Gestion abonnement</RibbonItem>
              </GroupCol>
            </GroupBody>
            <GroupCaption>Editions Francis Lefebvre</GroupCaption>
          </RibbonGroup>
          <RibbonGroup $w={122}>
            <GroupBody>
              <GroupCol>
                <RibbonItem><BanIcon />Se désinscrire</RibbonItem>
                <RibbonItem><WrenchIcon />Gestion des droits</RibbonItem>
                <RibbonItem><LockIcon />Confidentialité</RibbonItem>
              </GroupCol>
            </GroupBody>
            <GroupCaption>Administration</GroupCaption>
          </RibbonGroup>
          <RibbonGroup $w={134}>
            <GroupBody>
              <GroupCol>
                <RibbonItem><GlobeIcon />Mise à jour</RibbonItem>
                <RibbonItem><ReportIcon />Récapitulatif dossier</RibbonItem>
              </GroupCol>
            </GroupBody>
            <GroupCaption>Outils</GroupCaption>
          </RibbonGroup>
        </Ribbon>
        <RibbonEdge />
        <DocTabStrip>
          <DocTab>Convention collective</DocTab>
          <DocArrows>
            <svg width="6" height="9" viewBox="0 0 6 9"><path d="M5.500.500L.5 4.500l5 4z" fill="none" stroke="#666" /></svg>
            <svg width="6" height="9" viewBox="0 0 6 9"><path d="M.5.500l5 4-5 4z" fill="none" stroke="#666" /></svg>
          </DocArrows>
        </DocTabStrip>
        <FormPanel>
          <FormRow>
            <QLabel $w={167}>Code convention collective :</QLabel>
            <QField $w={65}>0430</QField>
            <QLabel $w={106} $endPad={19}>Intitulé :</QLabel>
            <QField $w={444}>Automobile (services de l'automobile: commerce et réparation, contrôle</QField>
            <ActivateLabel>Activer la convention collective</ActivateLabel>
            <CheckBox>
              <svg width="9" height="9" viewBox="0 0 9 9"><path d="M1.500 5l2 2.500 4-6" fill="none" stroke="#8d8d8d" strokeWidth="1.500" /></svg>
            </CheckBox>
          </FormRow>
          <FormRow>
            <QLabel $w={167}>Code IDCC :</QLabel>
            <QField $w={65}>1090</QField>
            <QLabel $w={106} $endPad={17}>Code NAF :</QLabel>
            <QField $w={65}><EllipsisBtn>...</EllipsisBtn></QField>
            <QLabel $w={212} $endPad={14}>Domaine d'activité :</QLabel>
            <QField $w={167} $plain>
              Aucun
              <SelectArrow>
                <svg width="7" height="4" viewBox="0 0 7 4"><path d="M0 0h7L3.500 4z" fill="#8e98a4" /></svg>
              </SelectArrow>
            </QField>
          </FormRow>
        </FormPanel>
        <Split>
          <NavPane>
            <NavRows>
              {navTree.map((n) => (
                <TreeRow key={n.label} $level={n.level} $h={19} $base={5} $selected={n.selected}>
                  <Arrow kind={n.arrow} />
                  <TreeIcon>{n.icon}</TreeIcon>
                  {n.label}
                </TreeRow>
              ))}
            </NavRows>
            <HScroll>
              <svg width="6" height="9" viewBox="0 0 6 9"><path d="M6 0L0 4.500 6 9z" fill="#4d5f80" /></svg>
              <HThumb>
                <GripLine /><GripLine /><GripLine /><GripLine />
              </HThumb>
              <svg width="6" height="9" viewBox="0 0 6 9"><path d="M0 0l6 4.500L0 9z" fill="#4d5f80" /></svg>
            </HScroll>
          </NavPane>
          <RecapPane>
            <RecapHead>Récapitulatif des références contrats existantes</RecapHead>
            <RecapBox>
              <TreeRow $level={0} $h={19} $base={6}>
                <Arrow kind="open" />
                <TreeIcon><PersonIcon /></TreeIcon>
                Non cadres
              </TreeRow>
              {contracts.map((c) => (
                <div key={c}>
                  <TreeRow $level={1} $h={17} $base={6}>
                    <Arrow kind="open" />
                    <TreeIcon><BookIcon /></TreeIcon>
                    {c}
                  </TreeRow>
                  <RecapTable>
                    <RecapHeader>
                      <RecapHeadCell>Code</RecapHeadCell>
                      <RecapHeadCell>Intitulé</RecapHeadCell>
                      <RecapHeadCell $last>Montant</RecapHeadCell>
                    </RecapHeader>
                    {primes.map(([code, title, amount]) => (
                      <RecapLine key={code}>
                        <span>{code}</span>
                        <span>{title}</span>
                        <RecapAmount>{amount}</RecapAmount>
                      </RecapLine>
                    ))}
                  </RecapTable>
                </div>
              ))}
              {groupsRest.map(([group, refs]) => (
                <div key={group}>
                  <TreeRow $level={0} $h={19} $base={6}>
                    <Arrow kind="open" />
                    <TreeIcon><PersonIcon /></TreeIcon>
                    {group}
                  </TreeRow>
                  {refs.map((r) => (
                    <TreeRow key={r} $level={1} $h={19} $base={6}>
                      <Arrow />
                      <TreeIcon><BookIcon /></TreeIcon>
                      {r}
                    </TreeRow>
                  ))}
                </div>
              ))}
            </RecapBox>
          </RecapPane>
        </Split>
        <FootBar>
          <FootBtn $w={24} $gap={8} />
          <FootBtn $w={24} $gap={411} />
          <FootBtn $w={81} $gap={6} />
          <FootBtn $w={81} $gap={7} />
          <FootBtn $w={80} $gap={0} />
        </FootBar>
      </QgcWindow>
    </Page>
  );
}
